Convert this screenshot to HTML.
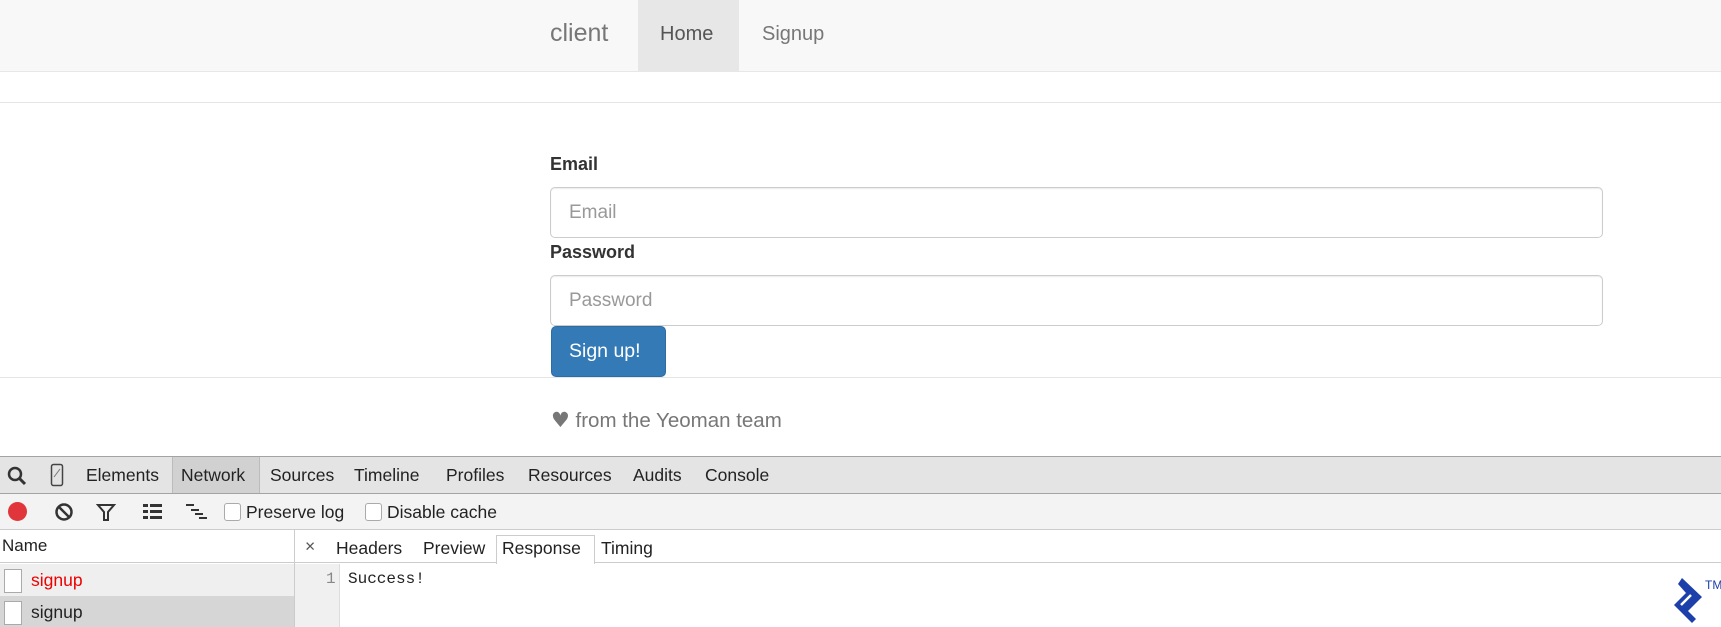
<!DOCTYPE html>
<html><head><style>
*{box-sizing:border-box;margin:0;padding:0}
body{width:1721px;height:627px;overflow:hidden;background:#fff;font-family:"Liberation Sans",sans-serif;position:relative}
.a{position:absolute;white-space:nowrap}
.nav{left:0;top:0;width:1721px;height:72px;background:#f8f8f8;border-bottom:1px solid #e7e7e7}
.lbl{font-weight:bold;font-size:18px;color:#333}
.inp{left:550px;width:1053px;height:51px;border:1px solid #ccc;border-radius:5px;font-size:19px;color:#999;padding:14px 0 0 18px;box-shadow:inset 0 1px 1px rgba(0,0,0,.075)}
.dt{font-size:17.5px;color:#222}
</style></head><body>
<div class="a nav"></div>
<div class="a" style="left:638px;top:0;width:101px;height:71px;background:#e7e7e7"></div>
<div class="a" style="left:550px;top:19px;font-size:25px;color:#777">client</div>
<div class="a" style="left:660px;top:23px;font-size:20px;color:#555">Home</div>
<div class="a" style="left:762px;top:23px;font-size:20px;color:#777">Signup</div>
<div class="a" style="left:0;top:102px;width:1721px;height:1px;background:#e5e5e5"></div>

<div class="a lbl" style="left:550px;top:154px">Email</div>
<div class="a inp" style="top:187px">Email</div>
<div class="a lbl" style="left:550px;top:242px">Password</div>
<div class="a inp" style="top:275px">Password</div>
<div class="a" style="left:551px;top:326px;width:115px;height:51px;background:#337ab7;border:1px solid #2e6da4;border-radius:5px;color:#fff;font-size:19.5px;padding:13px 0 0 17px">Sign up!</div>
<div class="a" style="left:0;top:377px;width:1721px;height:1px;background:#e5e5e5"></div>
<div class="a" style="left:551px;top:408px;font-size:20.5px;color:#777"><span style="font-family:'DejaVu Sans';font-size:21px">♥</span> from the Yeoman team</div>

<!-- devtools -->
<div class="a" style="left:0;top:456px;width:1721px;height:38px;background:#e4e4e4;border-top:1px solid #a3a3a3;border-bottom:1px solid #a3a3a3"></div>
<div class="a" style="left:172px;top:457px;width:88px;height:36px;background:#d1d1d1;border-left:1px solid #bbb;border-right:1px solid #bbb"></div>
<svg class="a" style="left:6px;top:465px" width="22" height="22" viewBox="0 0 22 22"><circle cx="9" cy="9" r="6" fill="none" stroke="#333" stroke-width="2.5"/><path d="M13 13l6 6" stroke="#333" stroke-width="3"/></svg>
<svg class="a" style="left:50px;top:463px" width="14" height="24"><rect x="1.5" y="1.5" width="11" height="21" rx="2" fill="none" stroke="#444" stroke-width="1.5"/><path d="M4 14l6-8" stroke="#777"/></svg>
<div class="a dt" style="left:86px;top:465px">Elements</div>
<div class="a dt" style="left:181px;top:465px">Network</div>
<div class="a dt" style="left:270px;top:465px">Sources</div>
<div class="a dt" style="left:354px;top:465px">Timeline</div>
<div class="a dt" style="left:446px;top:465px">Profiles</div>
<div class="a dt" style="left:528px;top:465px">Resources</div>
<div class="a dt" style="left:633px;top:465px">Audits</div>
<div class="a dt" style="left:705px;top:465px">Console</div>

<div class="a" style="left:0;top:494px;width:1721px;height:36px;background:#f3f3f3;border-bottom:1px solid #ccc"></div>
<div class="a" style="left:8px;top:502px;width:19px;height:19px;border-radius:50%;background:#e0353b"></div>
<svg class="a" style="left:54px;top:502px" width="20" height="20"><circle cx="10" cy="10" r="7.5" fill="none" stroke="#333" stroke-width="2.5"/><path d="M5 5l10 10" stroke="#333" stroke-width="2.5"/></svg>
<svg class="a" style="left:96px;top:502px" width="20" height="20"><path d="M2 3h16l-6 7v8h-4v-8z" fill="none" stroke="#333" stroke-width="2"/></svg>
<svg class="a" style="left:143px;top:504px" width="20" height="16"><rect x="0" y="0" width="5" height="3" fill="#333"/><rect x="7" y="0" width="12" height="3" fill="#333"/><rect x="0" y="6" width="5" height="3" fill="#333"/><rect x="7" y="6" width="12" height="3" fill="#333"/><rect x="0" y="12" width="5" height="3" fill="#333"/><rect x="7" y="12" width="12" height="3" fill="#333"/></svg>
<svg class="a" style="left:186px;top:504px" width="24" height="16"><rect x="0" y="0" width="8" height="2" fill="#333"/><rect x="5" y="5" width="8" height="2" fill="#333"/><rect x="9" y="9" width="8" height="2" fill="#333"/><rect x="13" y="13" width="8" height="2" fill="#333"/></svg>
<div class="a" style="left:224px;top:503px;width:17px;height:18px;border:1px solid #aaa;border-radius:3px;background:#fff"></div>
<div class="a dt" style="left:246px;top:502px">Preserve log</div>
<div class="a" style="left:365px;top:503px;width:17px;height:18px;border:1px solid #aaa;border-radius:3px;background:#fff"></div>
<div class="a dt" style="left:387px;top:502px">Disable cache</div>

<div class="a" style="left:0;top:530px;width:1721px;height:33px;border-bottom:1px solid #ccc"></div>
<div class="a" style="left:294px;top:530px;width:1px;height:97px;background:#ccc"></div>
<div class="a dt" style="left:2px;top:536px;font-size:17px">Name</div>
<div class="a dt" style="left:305px;top:536px;color:#555">×</div>
<div class="a dt" style="left:336px;top:538px">Headers</div>
<div class="a dt" style="left:423px;top:538px">Preview</div>
<div class="a" style="left:496px;top:535px;width:99px;height:29px;border:1px solid #ccc;border-bottom:none;background:#fff"></div>
<div class="a dt" style="left:502px;top:538px">Response</div>
<div class="a dt" style="left:601px;top:538px">Timing</div>

<div class="a" style="left:0;top:564px;width:294px;height:32px;background:#efefef"></div>
<div class="a" style="left:0;top:596px;width:294px;height:31px;background:#d6d6d6"></div>
<div class="a" style="left:4px;top:569px;width:18px;height:24px;border:1px solid #aaa;background:#fff"></div>
<div class="a dt" style="left:31px;top:570px;color:#e00">signup</div>
<div class="a" style="left:4px;top:601px;width:18px;height:24px;border:1px solid #aaa;background:#fff"></div>
<div class="a dt" style="left:31px;top:602px">signup</div>
<div class="a" style="left:295px;top:564px;width:45px;height:63px;background:#f0f0f0;border-right:1px solid #ddd"></div>
<div class="a" style="left:326px;top:570px;font-family:'Liberation Mono',monospace;font-size:16px;color:#888">1</div>
<div class="a" style="left:348px;top:570px;font-family:'Liberation Mono',monospace;font-size:16px;color:#222">Success!</div>

<svg class="a" style="left:1670px;top:574px" width="36" height="53" viewBox="0 0 36 53"><path d="M12 4L32 23L18 37L26 45L22 49L4 31L16 19L8 10Z" fill="#1d3faa"/><path d="M11 31L21 21" stroke="#fff" stroke-width="2.5"/></svg>
<div class="a" style="left:1705px;top:578px;font-size:12px;color:#1d3faa">TM</div>
</body></html>
